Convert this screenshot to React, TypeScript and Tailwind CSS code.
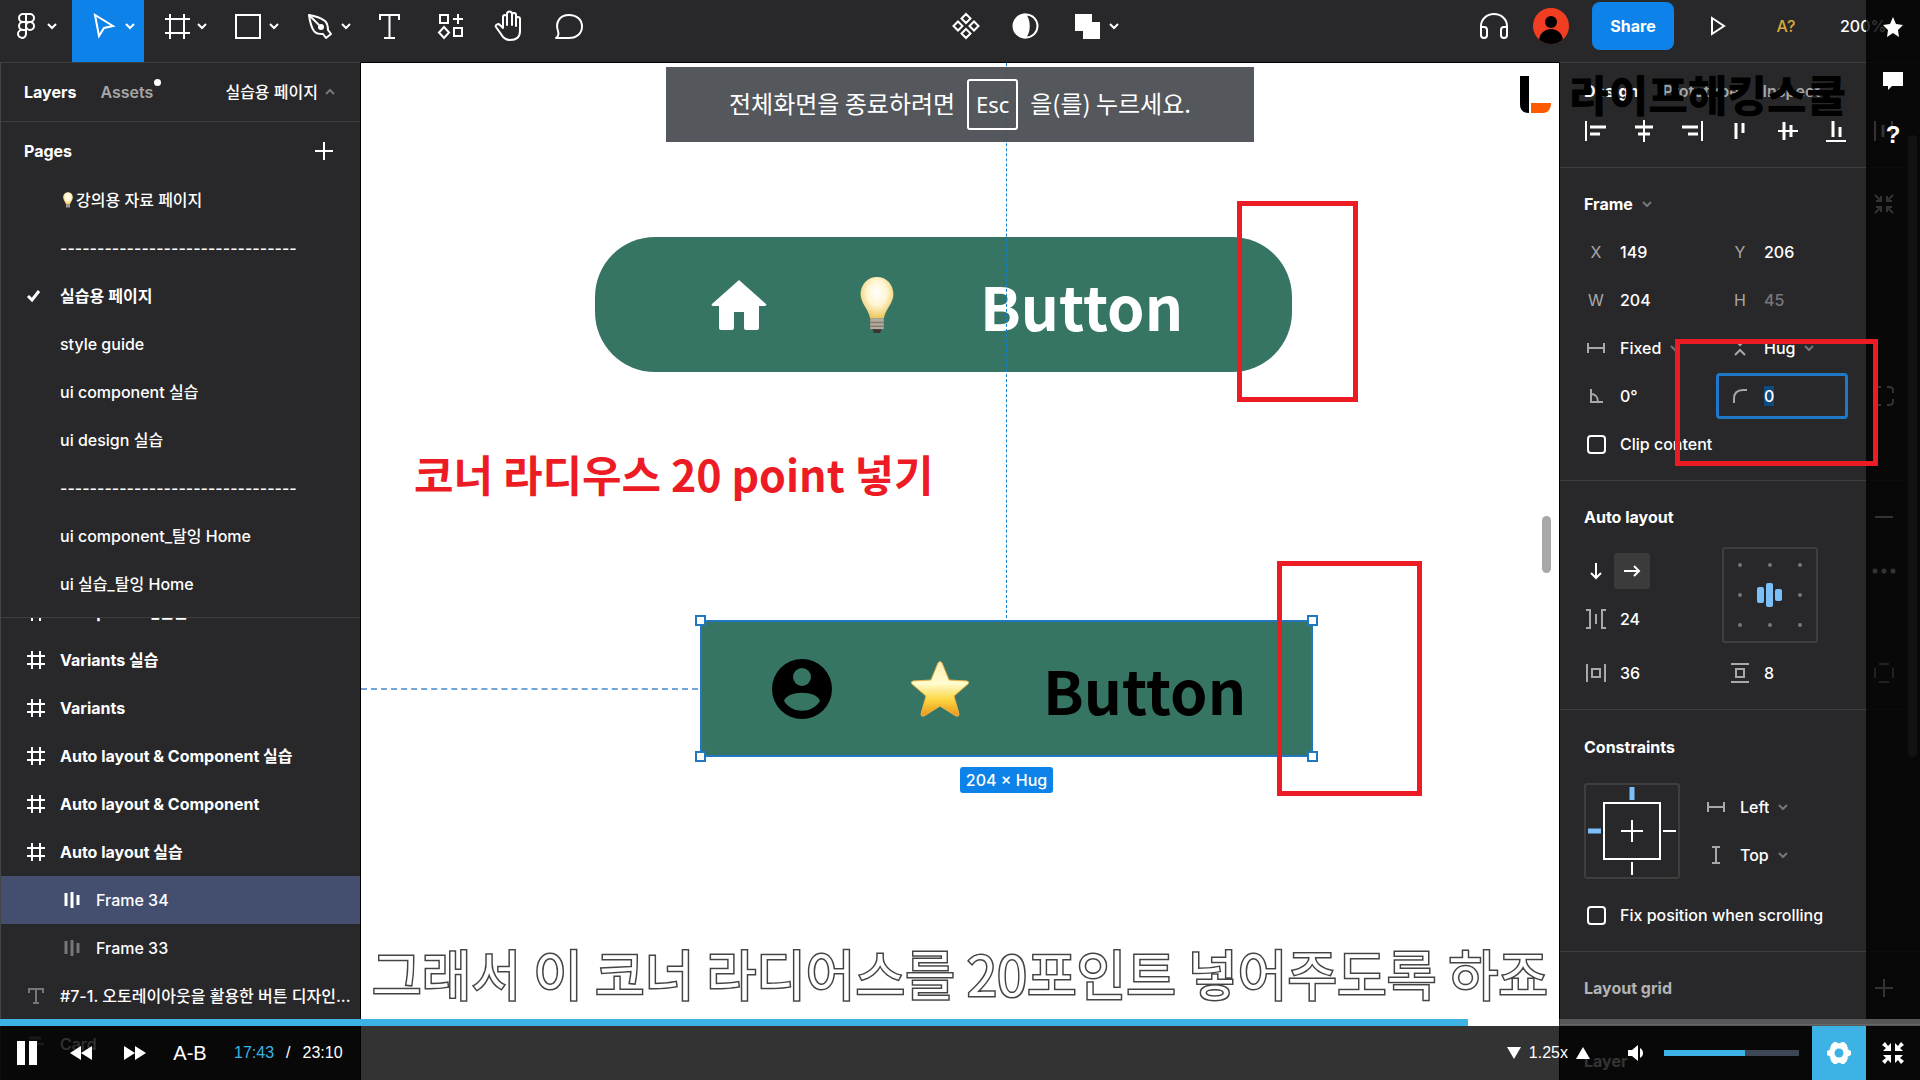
import { useState, type ReactNode } from "react";
import clsx from "clsx";

const pages = [
  { name: "강의용 자료 페이지", bulb: true },
  { name: "--------------------------------" },
  { name: "실습용 페이지", current: true },
  { name: "style guide" },
  { name: "ui component 실습" },
  { name: "ui design 실습" },
  { name: "--------------------------------" },
  { name: "ui component_탈잉 Home" },
  { name: "ui 실습_탈잉 Home" },
];

type Layer = { name: string; kind: "frame" | "auto" | "text" | "stack"; selected?: boolean };

const layers: Layer[] = [
  { name: "Component_실습", kind: "frame" },
  { name: "Variants 실습", kind: "frame" },
  { name: "Variants", kind: "frame" },
  { name: "Auto layout & Component 실습", kind: "frame" },
  { name: "Auto layout & Component", kind: "frame" },
  { name: "Auto layout 실습", kind: "frame" },
  { name: "Frame 34", kind: "auto", selected: true },
  { name: "Frame 33", kind: "auto" },
  { name: "#7-1. 오토레이아웃을 활용한 버튼 디자인...", kind: "text" },
  { name: "Card", kind: "stack" },
];

/* ---------- icons ---------- */

function Icon({ size = 24, sw = 2, className, children }: { size?: number; sw?: number; className?: string; children: ReactNode }) {
  return (
    <svg
      width={size}
      height={size}
      viewBox={`0 0 ${size} ${size}`}
      fill="none"
      stroke="currentColor"
      strokeWidth={sw}
      className={clsx("shrink-0", className)}
      aria-hidden="true"
    >
      {children}
    </svg>
  );
}

function Chevron({ className, up }: { className?: string; up?: boolean }) {
  return (
    <Icon size={12} sw={2} className={className}>
      <path d={up ? "M2 8l4-4 4 4" : "M2 4l4 4 4-4"} />
    </Icon>
  );
}

const FigmaIcon = () => (
  <Icon size={32}>
    <path d="M16 4h-3a4 4 0 0 0 0 8h3zM16 4h4a4 4 0 0 1 0 8h-4zM16 12h-3a4 4 0 0 0 0 8h3zM16 20h-3a4 4 0 1 0 3 4z" />
    <circle cx="20" cy="16" r="4" />
  </Icon>
);
const CursorIcon = () => (
  <Icon size={32}>
    <path d="M7 5l4 21 5-8 9-2z" />
  </Icon>
);
const FrameToolIcon = () => (
  <Icon size={32}>
    <path d="M10 4v25M24 4v25M5 9h25M5 23h25" />
  </Icon>
);
const RectIcon = () => (
  <Icon size={32}>
    <rect x="4" y="5" width="24" height="23" />
  </Icon>
);
const PenIcon = () => (
  <Icon size={32}>
    <path d="M5 5c7 1 12 3 16 6 3 3 3 6 3 9l3 4-5 4-3-4c-4 0-7 0-9-3C7 17 6 12 5 5z" strokeLinejoin="round" />
    <path d="M5 5l10 10" />
    <circle cx="17" cy="17" r="3" fill="currentColor" stroke="none" />
  </Icon>
);
const TextToolIcon = () => (
  <Icon size={32}>
    <path d="M6 10V5h19v5M15.500 5v23M10 28h11" />
  </Icon>
);
const ResourcesIcon = () => (
  <Icon size={32}>
    <rect x="6" y="5" width="8" height="8" />
    <path d="M24 4v10M19 9h10M10 17l5 5.500-5 5.500-5-5.500z" />
    <rect x="20" y="18" width="8" height="8" />
  </Icon>
);
const HandIcon = () => (
  <Icon size={32}>
    <path
      d="M9 18V7a2 2 0 0 1 4 0v8V4a2 2 0 0 1 5 0v11V5a2 2 0 0 1 4 0v11V9a2 2 0 0 1 4 0v12c0 6-4 9-10 9-4 0-7-2-9-6l-5-7c-1-2 2-4 4-2l3 3"
      strokeLinecap="round"
      strokeLinejoin="round"
    />
  </Icon>
);
const CommentIcon = () => (
  <Icon size={32}>
    <path d="M2 28c3-2 3-4 2-7C1 12 6 5 15 5c8 0 13 5 13 11.500S23 28 15 28z" strokeLinejoin="round" />
  </Icon>
);
const ComponentIcon = () => (
  <Icon size={32}>
    <path d="M16 4l4.500 4.500L16 13l-4.500-4.500zM16 19l4.500 4.500L16 28l-4.500-4.500zM8 11.500l4.500 4.500L8 20.500 3.500 16zM24 11.500l4.500 4.500-4.500 4.500-4.500-4.500z" />
  </Icon>
);
const MaskIcon = () => (
  <Icon size={32}>
    <circle cx="16" cy="16" r="11.500" />
    <path d="M15 4.500a11.500 11.500 0 0 0 0 23c5-6 5-17 0-23z" fill="currentColor" />
  </Icon>
);
const UnionIcon = () => (
  <Icon size={32}>
    <path d="M3 4h17v8h8v17H11v-8H3z" fill="currentColor" stroke="none" />
  </Icon>
);
const HeadphonesIcon = () => (
  <Icon size={32}>
    <path d="M3 26V16a13 12 0 0 1 26 0v10M3 17h3a3 3 0 0 1 3 3v5a3 3 0 0 1-6 0zM29 17h-3a3 3 0 0 0-3 3v5a3 3 0 0 0 6 0z" />
  </Icon>
);

const HashIcon = () => (
  <Icon>
    <path d="M8 3v18M16 3v18M3 8h18M3 16h18" />
  </Icon>
);
const AutoIcon = () => (
  <Icon>
    <path d="M6 5v13M12 4v16M18 7v10" strokeWidth="3" />
  </Icon>
);
const TextIcon = () => (
  <Icon>
    <path d="M5 9V5h14v4M12 5v14M9 19h6" />
  </Icon>
);
const StackIcon = () => (
  <Icon>
    <path d="M5 6h12M5 12h15M5 18h8" strokeWidth="3" />
  </Icon>
);

const WidthIcon = () => (
  <Icon>
    <path d="M4 7v10M20 7v10M4 12h16" />
  </Icon>
);
const HeightIcon = () => (
  <Icon>
    <path d="M8 4h8M8 20h8M12 4v16" />
  </Icon>
);
const HugIcon = () => (
  <Icon>
    <path d="M7 4l5 5 5-5M7 19l5-5 5 5" />
  </Icon>
);
const AngleIcon = () => (
  <Icon>
    <path d="M7 5v13h12M7 10c4 0 7 3 7 8" />
  </Icon>
);
const RadiusIcon = () => (
  <Icon>
    <path d="M6 19v-4C6 9 9 6 15 6h4" />
  </Icon>
);
const GapIcon = () => (
  <Icon>
    <path d="M2 3h4v18H2M22 3h-4v18h4M12 7v10" />
  </Icon>
);
const PadXIcon = () => (
  <Icon>
    <path d="M3 3v18M21 3v18M8 8h8v8H8z" />
  </Icon>
);
const PadYIcon = () => (
  <Icon>
    <path d="M3 3h18M3 21h18M8 8h8v8H8z" />
  </Icon>
);
const PlusIcon = () => (
  <Icon>
    <path d="M12 3v18M3 12h18" />
  </Icon>
);
const CollapseIcon = () => (
  <Icon>
    <path d="M3 3l6 6M9 4v5H4M21 3l-6 6M15 4v5h5M3 21l6-6M9 20v-5H4M21 21l-6-6M15 20v-5h5" />
  </Icon>
);

/* rule is the thin guide line, bars are the objects that snap to it */
const alignIcons = [
  { label: "Align left", rule: "M2 2v20", bars: "M6 8h16M6 15h10" },
  { label: "Align horizontal centers", rule: "M12 1v22", bars: "M3 8h18M6 15h12" },
  { label: "Align right", rule: "M22 2v20", bars: "M2 8h16M8 15h10" },
  { label: "Align top", rule: "", bars: "M8 4v16M15 4v10" },
  { label: "Align vertical centers", rule: "M2 12h20", bars: "M8 3v18M15 6v12" },
  { label: "Align bottom", rule: "M2 22h20", bars: "M9 2v16M16 8v10" },
  { label: "Distribute", rule: "M3 2v20M20 2v20", bars: "M11 6v12" },
];

function Bulb({ className }: { className?: string }) {
  return (
    <svg viewBox="0 0 36 60" className={className} aria-hidden="true">
      <defs>
        <radialGradient id="bulbGlow" cx="50%" cy="38%" r="60%">
          <stop offset="0" stopColor="#ffffff" />
          <stop offset="0.5" stopColor="#fff5d2" />
          <stop offset="1" stopColor="#eec860" />
        </radialGradient>
      </defs>
      <path d="M18 1C8 1 1 9 1 19c0 9 8 15 10 25h14c2-10 10-16 10-25C35 9 28 1 18 1z" fill="url(#bulbGlow)" />
      <path d="M11 44h14v11H11z" fill="#b3aba0" />
      <path d="M11 48h14M11 52h14" stroke="#857c70" strokeWidth="1.500" />
      <path d="M13 55h10l-2 4h-6z" fill="#3b352f" />
    </svg>
  );
}

function StarEmoji() {
  return (
    <svg viewBox="0 0 60 58" className="h-[58px] w-[60px]" aria-hidden="true">
      <defs>
        <linearGradient id="starFill" x1="0" y1="0" x2="0" y2="1">
          <stop offset="0" stopColor="#ffeeb0" />
          <stop offset="0.4" stopColor="#fffcd0" />
          <stop offset="0.7" stopColor="#fdd640" />
          <stop offset="1" stopColor="#ea951c" />
        </linearGradient>
      </defs>
      <path
        d="M28 3q2-3 4 0l7 17 18 1q3 1 1 3L44 36l5 18q0 3-3 2L30 46 14 56q-3 1-3-2l5-18L2 24q-2-2 1-3l18-1z"
        fill="url(#starFill)"
        stroke="#eeb24a"
        strokeWidth="1"
        strokeLinejoin="round"
      />
    </svg>
  );
}

/* ---------- toolbar ---------- */

function Tool({ label, icon, menu, active, className }: { label: string; icon: ReactNode; menu?: boolean; active?: boolean; className?: string }) {
  return (
    <button
      aria-label={label}
      className={clsx(
        "flex h-full items-center pb-[10px]",
        menu ? "justify-end gap-1 pr-2" : "w-[60px] justify-center",
        className ?? (menu && "w-[72px]"),
        active && "bg-[#0d82e8]"
      )}
    >
      {icon}
      {menu && <Chevron />}
    </button>
  );
}

function Toolbar() {
  return (
    <header className="flex h-[62px] shrink-0 justify-between bg-[#28282a] text-white">
      <div className="flex">
        <Tool label="Main menu" icon={<FigmaIcon />} menu className="mr-[6px] w-[66px]" />
        <Tool label="Move" icon={<CursorIcon />} menu active />
        <Tool label="Frame" icon={<FrameToolIcon />} menu />
        <Tool label="Rectangle" icon={<RectIcon />} menu />
        <Tool label="Pen" icon={<PenIcon />} menu />
        <Tool label="Text" icon={<TextToolIcon />} />
        <Tool label="Resources" icon={<ResourcesIcon />} />
        <Tool label="Hand" icon={<HandIcon />} />
        <Tool label="Comment" icon={<CommentIcon />} />
      </div>
      <div className="flex">
        <Tool label="Create component" icon={<ComponentIcon />} />
        <Tool label="Mask" icon={<MaskIcon />} />
        <Tool label="Union selection" icon={<UnionIcon />} menu />
      </div>
      <div className="flex">
        <Tool label="Audio" icon={<HeadphonesIcon />} />
        <div className="flex w-[54px] items-center justify-center pb-[10px]">
          <svg viewBox="0 0 36 36" className="size-9 rounded-full bg-[#f13d22]" aria-hidden="true">
            <circle cx="18" cy="14" r="6" />
            <ellipse cx="18" cy="33" rx="12" ry="12" />
          </svg>
        </div>
        <button className="mr-3 ml-[14px] mt-[2px] h-12 w-[82px] rounded-lg bg-[#0d82e8] text-base font-bold">Share</button>
        <Tool
          label="Present"
          icon={
            <Icon size={32}>
              <path d="M12 8l12 8-12 8z" />
            </Icon>
          }
        />
        <button className="w-20 pb-[10px] text-base font-medium text-[#d9a83a]">A?</button>
        <button className="w-[94px] pb-[10px] pl-[14px] text-left text-base font-medium">200%</button>
      </div>
    </header>
  );
}

/* ---------- left side ---------- */

function LeftPanel() {
  return (
    <aside className="flex w-[361px] shrink-0 flex-col overflow-hidden border-t border-r border-l border-t-[#3e3e3f] border-r-black border-l-[#454547] bg-[#28282a] text-base text-white">
      <div className="flex h-[59px] shrink-0 items-center border-b border-[#3e3e3f] pr-6 pl-[23px]">
        <button className="font-bold">Layers</button>
        <button className="relative ml-6 font-semibold text-[#a5a5a6]">
          Assets
          <span className="absolute -top-[1px] -right-2 size-[7px] rounded-full bg-white" />
        </button>
        <button className="ml-auto flex items-center gap-[6px] font-medium">
          실습용 페이지
          <Chevron up className="text-[#777]" />
        </button>
      </div>
      <div className="flex h-[58px] shrink-0 items-center justify-between pr-6 pl-[23px]">
        <h2 className="font-bold">Pages</h2>
        <button aria-label="Add page">
          <PlusIcon />
        </button>
      </div>
      <ul className="-mt-1 shrink-0 border-b border-[#3e3e3f] pb-[9px]">
        {pages.map((page, idx) => (
          <li key={idx} className="flex h-12 items-center pl-5">
            <span className="w-[39px]">
              {page.current && (
                <Icon size={24} sw={3}>
                  <path d="M7 12l4 4 7-9" />
                </Icon>
              )}
            </span>
            {page.bulb && <Bulb className="h-[17px] w-4" />}
            <span className={page.current ? "font-semibold" : "font-medium"}>{page.name}</span>
          </li>
        ))}
      </ul>
      <div className="min-h-0 flex-1 overflow-hidden">
        <ul className="-mt-[30px]">
          {layers.map((layer) => (
            <li
              key={layer.name}
              className={clsx(
                "flex h-12 items-center gap-3 whitespace-nowrap",
                layer.kind === "auto" ? "pl-[59px]" : "pl-[23px]",
                layer.selected && "bg-[#444f70]",
                layer.kind === "frame" ? "font-bold" : "font-medium"
              )}
            >
              <span className={clsx(layer.kind !== "frame" && !layer.selected && "text-[#77777a]")}>
                {layer.kind === "frame" && <HashIcon />}
                {layer.kind === "auto" && <AutoIcon />}
                {layer.kind === "text" && <TextIcon />}
                {layer.kind === "stack" && <StackIcon />}
              </span>
              <span>{layer.name}</span>
            </li>
          ))}
        </ul>
      </div>
    </aside>
  );
}

/* ---------- canvas ---------- */

function Canvas() {
  return (
    <main className="relative min-w-0 flex-1 overflow-hidden border-t border-black bg-white">
      <div className="absolute top-[174px] left-[234px] flex h-[135px] w-[697px] items-center gap-[72px] rounded-[60px] bg-[#367564] pl-[111px] text-white">
        <svg viewBox="0 0 66 66" className="size-[66px]" fill="currentColor" aria-hidden="true">
          <path d="M33 8L6 32c-1 1 0 2 1 2h6v22q0 2 2 2h11q2 0 2-2V40h10v16q0 2 2 2h11q2 0 2-2V34h6c1 0 2-1 1-2z" />
        </svg>
        <div className="flex w-[66px] justify-center">
          <Bulb className="h-[58px] w-9" />
        </div>
        <span className="-ml-[2px] font-['Noto_Sans_CJK_KR',sans-serif] text-[60px] leading-none font-bold">Button</span>
      </div>

      <div className="absolute top-[557px] left-[339px] flex h-[137px] w-[613px] items-center gap-[72px] border-2 border-[#1f78c0] bg-[#367564] pl-[67px] text-black">
        <svg viewBox="0 0 66 66" className="size-[66px]" aria-hidden="true">
          <circle cx="33" cy="33" r="30" />
          <circle cx="33" cy="21" r="9" fill="#367564" />
          <path d="M15 45c3-11 33-11 36 0-8 13-28 13-36 0z" fill="#367564" />
        </svg>
        <div className="flex w-[66px] justify-center">
          <StarEmoji />
        </div>
        <span className="-ml-[2px] font-['Noto_Sans_CJK_KR',sans-serif] text-[60px] leading-none font-bold">Button</span>
        <span className="absolute -top-[7px] -left-[7px] size-[11px] border-2 border-[#1f78c0] bg-white" />
        <span className="absolute -top-[7px] -right-[7px] size-[11px] border-2 border-[#1f78c0] bg-white" />
        <span className="absolute -bottom-[7px] -left-[7px] size-[11px] border-2 border-[#1f78c0] bg-white" />
        <span className="absolute -right-[7px] -bottom-[7px] size-[11px] border-2 border-[#1f78c0] bg-white" />
      </div>

      <div className="absolute top-0 left-[645px] h-[555px] border-l border-dashed border-[#1580d0]" />
      <div className="absolute top-[625px] left-0 w-[337px] border-t-2 border-dashed border-[#70a5d6]" />
      <div className="absolute top-[704px] left-[599px] flex h-[26px] w-[93px] items-center justify-center rounded-[3px] bg-[#0d82e8] text-base font-medium whitespace-nowrap text-white">
        204 × Hug
      </div>

      <p className="absolute top-[382px] left-[53px] font-['Noto_Sans_CJK_KR',sans-serif] text-[43px] leading-[56px] font-bold whitespace-nowrap text-[#ed1c24]">
        코너 라디우스 20 point 넣기
      </p>
      <div className="absolute top-[138px] left-[876px] h-[201px] w-[121px] border-5 border-[#ed1c24]" />
      <div className="absolute top-[498px] left-[916px] h-[235px] w-[145px] border-5 border-[#ed1c24]" />
      <div className="absolute top-[453px] right-2 h-[57px] w-[9px] rounded-full bg-[#a8a8a9]" />
    </main>
  );
}

/* ---------- right side ---------- */

function Field({ id, label, icon, value, dim }: { id: string; label: string; icon: ReactNode; value: string; dim?: boolean }) {
  return (
    <div className="flex h-12 items-center gap-3">
      <label htmlFor={id} aria-label={label} className="flex w-6 justify-center text-[#a8a8a9]">
        {icon}
      </label>
      <input id={id} defaultValue={value} className={clsx("w-20 bg-transparent font-medium outline-none", dim && "text-[#77777a]")} />
    </div>
  );
}

function Dropdown({ id, label, icon, value }: { id: string; label: string; icon: ReactNode; value: string }) {
  return (
    <div className="flex h-12 items-center gap-3">
      <label htmlFor={id} aria-label={label} className="text-[#a8a8a9]">
        {icon}
      </label>
      <div className="flex items-center gap-2">
        <select id={id} defaultValue={value} className="field-sizing-content appearance-none bg-transparent font-medium outline-none">
          <option>{value}</option>
        </select>
        <Chevron className="text-[#77777a]" />
      </div>
    </div>
  );
}

function Check({ id, label }: { id: string; label: string }) {
  return (
    <div className="flex h-12 items-center gap-3">
      <span className="flex w-6 justify-center">
        <input id={id} type="checkbox" className="size-[19px] appearance-none rounded-[4px] border-2 border-white" />
      </span>
      <label htmlFor={id} className="font-medium">
        {label}
      </label>
    </div>
  );
}

const row = "grid grid-cols-[144px_1fr_24px] items-center";

function RightPanel() {
  return (
    <aside className="relative w-[361px] shrink-0 overflow-hidden border-t border-l border-t-[#3e3e3f] border-l-black bg-[#28282a] text-base text-white">
      <section className="border-b border-[#3e3e3f] px-6 pb-6">
        <div className="flex h-[56px] items-center gap-6">
          <button className="font-bold">Design</button>
          <button className="font-semibold text-[#a5a5a6]">Prototype</button>
          <button className="font-semibold text-[#a5a5a6]">Inspect</button>
        </div>
        <div className="flex gap-6">
          {alignIcons.map((item) => (
            <button key={item.label} aria-label={item.label}>
              <Icon>
                <path d={item.rule} />
                <path d={item.bars} strokeWidth="3" />
              </Icon>
            </button>
          ))}
        </div>
      </section>

      <section className="border-b border-[#3e3e3f] px-6 py-3">
        <div className="flex h-12 items-center justify-between">
          <h2 className="flex items-center gap-2 font-bold">
            Frame
            <Chevron className="text-[#77777a]" />
          </h2>
          <button aria-label="Resize to fit">
            <CollapseIcon />
          </button>
        </div>
        <div className={row}>
          <Field id="x" label="X position" icon="X" value="149" />
          <Field id="y" label="Y position" icon="Y" value="206" />
        </div>
        <div className={row}>
          <Field id="w" label="Width" icon="W" value="204" />
          <Field id="h" label="Height" icon="H" value="45" dim />
        </div>
        <div className={row}>
          <Dropdown id="hsize" label="Horizontal resizing" icon={<WidthIcon />} value="Fixed" />
          <Dropdown id="vsize" label="Vertical resizing" icon={<HugIcon />} value="Hug" />
        </div>
        <div className={row}>
          <Field id="rotation" label="Rotation" icon={<AngleIcon />} value="0°" />
          <div className="-ml-3 flex h-[46px] w-[132px] items-center gap-3 rounded-[4px] border-3 border-[#1f78c8] pl-[9px]">
            <label htmlFor="radius" aria-label="Corner radius" className="text-[#a8a8a9]">
              <RadiusIcon />
            </label>
            <input id="radius" defaultValue="0" className="field-sizing-content h-5 bg-[#0d4a80] font-medium outline-none" />
          </div>
          <button aria-label="Independent corners">
            <Icon>
              <path d="M3 9V7q0-4 4-4h2M15 3h2q4 0 4 4v2M21 15v2q0 4-4 4h-2M9 21H7q-4 0-4-4v-2" />
            </Icon>
          </button>
        </div>
        <Check id="clip" label="Clip content" />
      </section>

      <section className="border-b border-[#3e3e3f] px-6 py-3">
        <div className="mb-[6px] flex h-12 items-center justify-between">
          <h2 className="font-bold">Auto layout</h2>
          <button aria-label="Remove auto layout">
            <Icon>
              <path d="M3 12h18" />
            </Icon>
          </button>
        </div>
        <div className="mb-[6px] grid grid-cols-[138px_1fr_24px]">
          <div>
            <div className="flex h-12 items-center gap-[6px]">
              <button aria-label="Vertical direction">
                <Icon>
                  <path d="M12 4v15M7 14l5 5 5-5" />
                </Icon>
              </button>
              <button aria-label="Horizontal direction" className="flex size-9 items-center justify-center rounded-[3px] bg-[#3b3b3c]">
                <Icon>
                  <path d="M4 12h15M14 7l5 5-5 5" />
                </Icon>
              </button>
            </div>
            <Field id="gap" label="Spacing" icon={<GapIcon />} value="24" />
          </div>
          <svg viewBox="0 0 96 96" className="size-24" aria-hidden="true">
            <rect x="1" y="1" width="94" height="94" rx="2" fill="none" stroke="#3e3e3f" strokeWidth="2" />
            {[18, 48, 78].map((cy) =>
              [18, 48, 78].map((cx) => (cx === 48 && cy === 48 ? null : <circle key={`${cx}-${cy}`} cx={cx} cy={cy} r="2" fill="#77777a" />))
            )}
            <g fill="#7cc0fa">
              <rect x="35" y="40" width="7" height="16" rx="2" />
              <rect x="44" y="36" width="7" height="24" rx="2" />
              <rect x="53" y="42" width="7" height="12" rx="2" />
            </g>
          </svg>
          <button aria-label="More options" className="flex h-12 items-center">
            <Icon>
              <g fill="currentColor" stroke="none">
                <circle cx="3" cy="12" r="2.500" />
                <circle cx="12" cy="12" r="2.500" />
                <circle cx="21" cy="12" r="2.500" />
              </g>
            </Icon>
          </button>
        </div>
        <div className={row}>
          <Field id="padx" label="Horizontal padding" icon={<PadXIcon />} value="36" />
          <Field id="pady" label="Vertical padding" icon={<PadYIcon />} value="8" />
          <button aria-label="Independent padding" className="text-[#a8a8a9]">
            <Icon>
              <path d="M7 3h10M7 21h10M3 7v10M21 7v10" />
            </Icon>
          </button>
        </div>
      </section>

      <section className="border-b border-[#3e3e3f] px-6 pt-[13px] pb-3">
        <h2 className="flex h-12 items-center font-bold">Constraints</h2>
        <div className="my-3 flex gap-6">
          <svg viewBox="0 0 96 96" className="size-24" fill="none" aria-hidden="true">
            <rect x="1" y="1" width="94" height="94" rx="2" stroke="#3e3e3f" strokeWidth="2" />
            <rect x="20" y="20" width="56" height="56" stroke="#fff" strokeWidth="2" />
            <path d="M48 37v22M37 48h22M79 48h13M48 79v13" stroke="#fff" strokeWidth="2" />
            <path d="M48 4v13M4 48h13" stroke="#7cc0fa" strokeWidth="5" />
          </svg>
          <div>
            <Dropdown id="ch" label="Horizontal constraint" icon={<WidthIcon />} value="Left" />
            <Dropdown id="cv" label="Vertical constraint" icon={<HeightIcon />} value="Top" />
          </div>
        </div>
        <Check id="fix" label="Fix position when scrolling" />
      </section>

      <section className="border-b border-[#3e3e3f] px-6 py-3">
        <div className="flex h-12 items-center justify-between">
          <h2 className="font-bold text-[#b3b3b4]">Layout grid</h2>
          <button aria-label="Add layout grid">
            <PlusIcon />
          </button>
        </div>
      </section>
      <section className="px-6 py-3">
        <h2 className="flex h-12 items-center font-bold">Layer</h2>
      </section>
      <div className="absolute top-[72px] right-[3px] h-[622px] w-[9px] rounded-full bg-[#5a5a5a]" />
    </aside>
  );
}

/* ---------- video player ---------- */

function SideRail() {
  return (
    <nav className="absolute top-0 right-0 bottom-[61px] flex w-[54px] flex-col items-center bg-black/80 text-white">
      <button aria-label="즐겨찾기" className="flex size-[54px] items-center justify-center">
        <svg viewBox="0 0 20 20" className="size-5" fill="currentColor" aria-hidden="true">
          <path d="M10 0l3 7 7 1-5 5 1 7-6-4-6 4 1-7-5-5 7-1z" />
        </svg>
      </button>
      <button aria-label="댓글" className="flex size-[54px] items-center justify-center">
        <svg viewBox="0 0 20 18" className="h-[18px] w-5" fill="currentColor" aria-hidden="true">
          <path d="M0 0h20v14H9l-4 4v-4H0z" />
        </svg>
      </button>
      <button className="size-[54px] font-['Liberation_Sans',sans-serif] text-2xl font-bold">?</button>
    </nav>
  );
}

function Player() {
  const [played, setPlayed] = useState(1063);
  const [volume, setVolume] = useState(60);
  const total = 1390;
  const pct = (played / total) * 100;
  const clock = (s: number) => `${Math.floor(s / 60)}:${String(s % 60).padStart(2, "0")}`;

  return (
    <div className="absolute inset-x-0 bottom-0 font-['Liberation_Sans',sans-serif] text-base text-white">
      <input
        type="range"
        aria-label="재생 위치"
        min={0}
        max={total}
        value={played}
        onChange={(e) => setPlayed(Number(e.target.value))}
        className="block h-[7px] w-full appearance-none [&::-webkit-slider-thumb]:size-0 [&::-webkit-slider-thumb]:appearance-none"
        style={{ background: `linear-gradient(to right, #3db2e5 ${pct}%, rgba(255,255,255,0.22) ${pct}%)` }}
      />
      <div className="flex h-[54px] items-center bg-black/80">
        <button aria-label="일시정지" className="flex w-[54px] justify-center">
          <svg viewBox="0 0 20 24" className="h-6 w-5" fill="currentColor" aria-hidden="true">
            <path d="M0 0h8v24H0zM12 0h8v24h-8z" />
          </svg>
        </button>
        <button aria-label="뒤로" className="flex w-[54px] justify-center">
          <svg viewBox="0 0 22 14" className="h-[14px] w-[22px]" fill="currentColor" aria-hidden="true">
            <path d="M11 0v14L0 7zM22 0v14L11 7z" />
          </svg>
        </button>
        <button aria-label="앞으로" className="flex w-[54px] justify-center">
          <svg viewBox="0 0 22 14" className="h-[14px] w-[22px]" fill="currentColor" aria-hidden="true">
            <path d="M0 0v14l11-7zM11 0v14l11-7z" />
          </svg>
        </button>
        <button className="w-14 text-xl">A-B</button>
        <div className="ml-4 flex gap-3">
          <span className="text-[#3db2e5]">{clock(played)}</span>
          <span>/</span>
          <span>{clock(total)}</span>
        </div>

        <div className="ml-auto flex items-center gap-2">
          <button aria-label="느리게">
            <svg viewBox="0 0 14 12" className="h-3 w-[14px]" fill="currentColor" aria-hidden="true">
              <path d="M0 0h14L7 12z" />
            </svg>
          </button>
          <span>1.25x</span>
          <button aria-label="빠르게">
            <svg viewBox="0 0 14 12" className="h-3 w-[14px]" fill="currentColor" aria-hidden="true">
              <path d="M0 12h14L7 0z" />
            </svg>
          </button>
        </div>
        <button aria-label="음소거" className="mr-5 ml-[38px]">
          <svg viewBox="0 0 16 16" className="size-4" fill="currentColor" aria-hidden="true">
            <path d="M0 5h4l6-5v16l-6-5H0z" />
            <path d="M12 3c4 2 4 8 0 10z" />
          </svg>
        </button>
        <input
          type="range"
          aria-label="볼륨"
          value={volume}
          onChange={(e) => setVolume(Number(e.target.value))}
          className="mr-[13px] h-[6px] w-[135px] appearance-none [&::-webkit-slider-thumb]:size-0 [&::-webkit-slider-thumb]:appearance-none"
          style={{ background: `linear-gradient(to right, #3db2e5 ${volume}%, #3d4654 ${volume}%)` }}
        />
        <button aria-label="설정" className="flex size-[54px] items-center justify-center bg-[#3db2e5]">
          <svg viewBox="0 0 24 24" className="size-6" aria-hidden="true">
            <circle cx="12" cy="12" r="9" fill="#fff" />
            <path
              d="M7 1.500h2L12 3l3-1.500h2M19 4l2 4M24 10.500v3M21 16l-2 4M17 22.500h-2L12 21l-3 1.500H7M5 20l-2-4M0 13.500v-3M3 8l2-4"
              fill="none"
              stroke="#fff"
              strokeWidth="1"
            />
            <path d="M5 3l2-2 5 2 5-2 3 3 0 4 4 2v4l-4 2v4l-3 3-5-2-5 2-3-3v-4l-4-2v-4l4-2V4z" fill="#fff" />
            <circle cx="12" cy="12" r="4.500" fill="#3db2e5" />
          </svg>
        </button>
        <button aria-label="전체화면 종료" className="flex size-[54px] items-center justify-center">
          <svg viewBox="0 0 22 22" className="size-[22px]" fill="currentColor" aria-hidden="true">
            <path d="M9 9V1L6 4 3 0 0 3l4 3-3 3zM13 9V1l3 3 3-4 3 3-4 3 3 3zM9 13v8l-3-3-3 4-3-3 4-3-3-3zM13 13v8l3-3 3 4 3-3-4-3 3-3z" />
          </svg>
        </button>
      </div>
    </div>
  );
}

function Watermark() {
  return (
    <div className="absolute top-[69px] right-[74px] flex items-center gap-[18px] text-black">
      <svg viewBox="0 0 31 37" className="mt-[3px] h-[37px] w-[31px]" aria-hidden="true">
        <path d="M0 0h9v37C3 37 0 34 0 28z" />
        <path d="M11 27h20c0 6-3 10-8 10H11z" fill="#ff5a00" />
      </svg>
      <span className="font-['Noto_Sans_CJK_KR',sans-serif] text-[43px] leading-[48px] font-black">라이프해킹스쿨</span>
    </div>
  );
}

export default function App() {
  return (
    <div className="relative flex h-screen flex-col overflow-hidden bg-[#28282a] font-['Inter','Noto_Sans_CJK_KR',sans-serif]">
      <Toolbar />
      <div className="flex min-h-0 flex-1">
        <LeftPanel />
        <Canvas />
        <RightPanel />
      </div>

      <Watermark />
      <SideRail />

      <div className="absolute top-[339px] right-[42px] h-[127px] w-[203px] border-5 border-[#ed1c24]" />

      <div className="absolute top-[67px] left-1/2 flex h-[75px] w-[588px] -translate-x-1/2 items-center justify-center gap-3 bg-[#4b4f54]/95 font-['Noto_Sans_CJK_KR',sans-serif] text-2xl text-white">
        <span className="pb-1">전체화면을 종료하려면</span>
        <kbd className="flex h-[51px] w-[51px] items-center justify-center rounded-[3px] border-2 border-white font-['Noto_Sans',sans-serif] text-[22px]">
          Esc
        </kbd>
        <span className="pb-1">을(를) 누르세요.</span>
      </div>

      <p className="absolute inset-x-0 bottom-[67px] text-center font-['Noto_Sans_CJK_KR',sans-serif] text-[54px] leading-[80px] font-normal whitespace-nowrap text-white [-webkit-text-stroke:3px_#444] [paint-order:stroke_fill]">
        그래서 이 코너 라디어스를 20포인트 넣어주도록 하죠
      </p>

      <Player />
    </div>
  );
}
